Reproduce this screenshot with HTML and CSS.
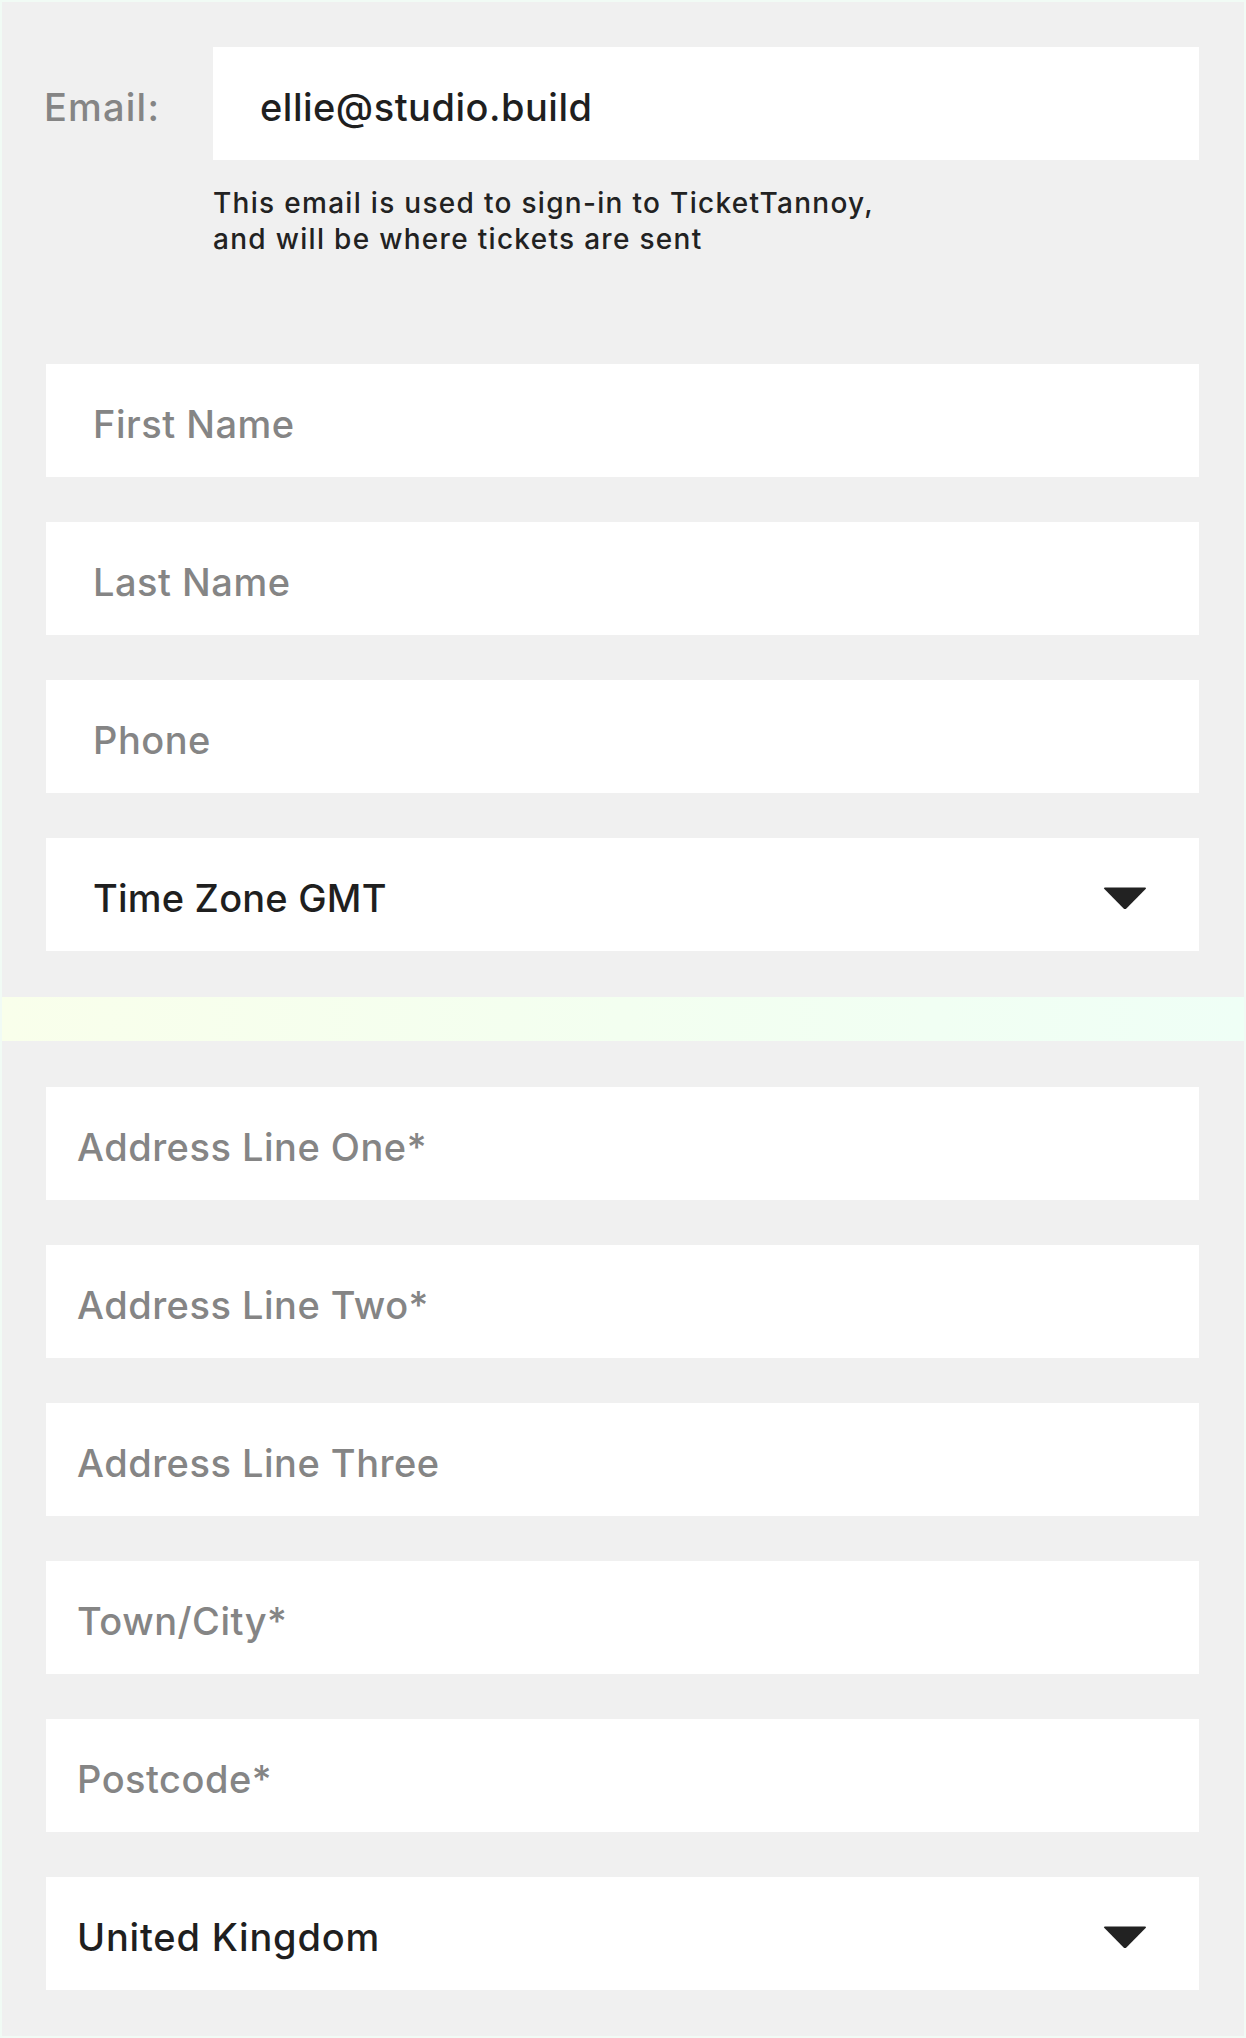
FILE: index.html
```html
<!DOCTYPE html>
<html lang="en">
<head>
<meta charset="utf-8">
<title>Account details</title>
<link rel="stylesheet" href="styles.css">
</head>
<body>
<div class="page">
  <section class="section section-top">
    <div class="email-row">
      <label class="email-label" for="email">Email:</label>
      <input class="field field-email" id="email" type="email" value="ellie@studio.build">
    </div>
    <p class="helper">This email is used to sign-in to TicketTannoy,<br>and will be where tickets are sent</p>
    <div class="fields fields-top">
      <input class="field field-upper" type="text" placeholder="First Name">
      <input class="field field-upper" type="text" placeholder="Last Name">
      <input class="field field-upper" type="tel" placeholder="Phone">
      <div class="field field-upper select">
        <span class="select-value select-tz">Time Zone GMT</span>
        <svg class="caret" width="44" height="23" viewBox="0 0 44 23"><path d="M2 0.5 H42 Q44 0.5 42.6 2 L23.4 21.4 Q22 22.8 20.6 21.4 L1.4 2 Q0 0.5 2 0.5 Z" fill="#222"/></svg>
      </div>
    </div>
  </section>
  <div class="strip"></div>
  <section class="section section-bottom">
    <div class="fields">
      <input class="field field-lower" type="text" placeholder="Address Line One*">
      <input class="field field-lower" type="text" placeholder="Address Line Two*">
      <input class="field field-lower" type="text" placeholder="Address Line Three">
      <input class="field field-lower" type="text" placeholder="Town/City*">
      <input class="field field-lower" type="text" placeholder="Postcode*">
      <div class="field field-lower select">
        <span class="select-value select-country">United Kingdom</span>
        <svg class="caret" width="44" height="23" viewBox="0 0 44 23"><path d="M2 0.5 H42 Q44 0.5 42.6 2 L23.4 21.4 Q22 22.8 20.6 21.4 L1.4 2 Q0 0.5 2 0.5 Z" fill="#222"/></svg>
      </div>
    </div>
  </section>
</div>
</body>
</html>
```

FILE: styles.css
```css
* {
  box-sizing: border-box;
}

html, body {
  margin: 0;
  padding: 0;
  background: #ffffff;
}

body {
  font-family: Inter, "Noto Sans", "Liberation Sans", sans-serif;
  -webkit-font-smoothing: antialiased;
}

.page {
  width: 1246px;
  height: 2038px;
  background: #f0f0f0;
  border: 2px solid #f1fbf5;
  display: flex;
  flex-direction: column;
}

.section-top {
  padding: 45px 45px 46px 44px;
}

.section-bottom {
  padding: 46px 45px 0 44px;
  flex: 1;
}

.email-row {
  display: grid;
  grid-template-columns: 167px 1fr;
  align-items: center;
}

.email-label {
  font-size: 38px;
  font-weight: 500;
  letter-spacing: 1.2px;
  color: #858585;
  margin-left: -2px;
  padding-top: 6px;
}

.field {
  display: flex;
  align-items: center;
  width: 100%;
  height: 113px;
  border: none;
  outline: none;
  margin: 0;
  background: #ffffff;
  font-family: Inter, "Noto Sans", "Liberation Sans", sans-serif;
  font-size: 38px;
  font-weight: 500;
  letter-spacing: 0.5px;
  color: #1f1f1f;
  padding-top: 6px;
  padding-bottom: 0;
}

.field::placeholder {
  color: #858585;
  opacity: 1;
}

.field-email {
  padding-left: 47px;
}

.field-upper {
  padding-left: 47px;
}

.field-lower {
  padding-left: 31px;
}

.select-tz {
  letter-spacing: 0.2px;
}

.select-country {
  letter-spacing: 0.8px;
}

.helper {
  margin: 25px 0 0 167px;
  font-size: 28px;
  line-height: 36px;
  font-weight: 500;
  letter-spacing: 1.3px;
  color: #222222;
}

.fields {
  display: flex;
  flex-direction: column;
  gap: 45px;
}

.fields-top {
  margin-top: 107px;
}

.select {
  justify-content: space-between;
  padding-right: 52px;
}

.caret {
  display: block;
  margin-top: 2px;
}

.strip {
  height: 44px;
  background: linear-gradient(90deg, #f9ffeb 0%, #f3fff0 50%, #effff6 100%);
}
```
